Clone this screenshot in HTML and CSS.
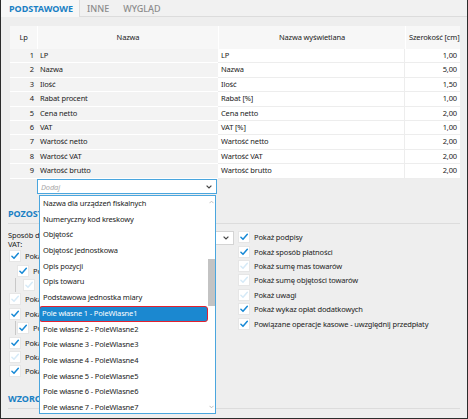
FILE: index.html
```html
<!DOCTYPE html>
<html lang="pl">
<head>
    <meta charset="UTF-8">
    <title>Ustawienia wydruku</title>
    <link rel="stylesheet" href="styles.css">
</head>
<body>
    <div class="window">
        <!-- zakładki -->
        <div class="tabs">
            <div class="tab active">PODSTAWOWE</div>
            <div class="tab">INNE</div>
            <div class="tab">WYGLĄD</div>
        </div>

        <div class="panel">
            <!-- kolumny wydruku -->
            <div class="grid">
                <div class="grid-row grid-head">
                    <div>Lp</div>
                    <div>Nazwa</div>
                    <div>Nazwa wyświetlana</div>
                    <div>Szerokość [cm]</div>
                </div>
                <div class="grid-row"><div class="lp">1</div><div class="name">LP</div><div class="disp">LP</div><div class="num">1,00</div></div>
                <div class="grid-row"><div class="lp">2</div><div class="name">Nazwa</div><div class="disp">Nazwa</div><div class="num">5,00</div></div>
                <div class="grid-row"><div class="lp">3</div><div class="name">Ilość</div><div class="disp">Ilość</div><div class="num">1,50</div></div>
                <div class="grid-row"><div class="lp">4</div><div class="name">Rabat procent</div><div class="disp">Rabat [%]</div><div class="num">1,00</div></div>
                <div class="grid-row"><div class="lp">5</div><div class="name">Cena netto</div><div class="disp">Cena netto</div><div class="num">2,00</div></div>
                <div class="grid-row"><div class="lp">6</div><div class="name">VAT</div><div class="disp">VAT [%]</div><div class="num">1,00</div></div>
                <div class="grid-row"><div class="lp">7</div><div class="name">Wartość netto</div><div class="disp">Wartość netto</div><div class="num">2,00</div></div>
                <div class="grid-row"><div class="lp">8</div><div class="name">Wartość VAT</div><div class="disp">Wartość VAT</div><div class="num">2,00</div></div>
                <div class="grid-row"><div class="lp">9</div><div class="name">Wartość brutto</div><div class="disp">Wartość brutto</div><div class="num">2,00</div></div>
            </div>

            <!-- dodawanie kolumny, lista rozwinięta -->
            <div class="add-row">
                <div class="combo add-combo">
                    <span class="placeholder">Dodaj</span>
                    <svg class="chev" viewBox="0 0 6 4"><path d="M0.6 0.6 L3 3 L5.4 0.6"/></svg>

                    <div class="dropdown">
                        <div class="dd-items">
                            <div class="dd-item">Nazwa dla urządzeń fiskalnych</div>
                            <div class="dd-item">Numeryczny kod kreskowy</div>
                            <div class="dd-item">Objętość</div>
                            <div class="dd-item">Objętość jednostkowa</div>
                            <div class="dd-item">Opis pozycji</div>
                            <div class="dd-item">Opis towaru</div>
                            <div class="dd-item">Podstawowa jednostka miary</div>
                            <div class="dd-item selected">Pole własne 1 - PoleWlasne1</div>
                            <div class="dd-item">Pole własne 2 - PoleWlasne2</div>
                            <div class="dd-item">Pole własne 3 - PoleWlasne3</div>
                            <div class="dd-item">Pole własne 4 - PoleWlasne4</div>
                            <div class="dd-item">Pole własne 5 - PoleWlasne5</div>
                            <div class="dd-item">Pole własne 6 - PoleWlasne6</div>
                            <div class="dd-item">Pole własne 7 - PoleWlasne7</div>
                        </div>
                        <div class="dd-scroll">
                            <svg class="dd-arrow" viewBox="0 0 6 4"><path d="M0.6 3.4 L3 1 L5.4 3.4"/></svg>
                            <div class="dd-track"><div class="dd-thumb"></div></div>
                            <svg class="dd-arrow" viewBox="0 0 6 4"><path d="M0.6 0.6 L3 3 L5.4 0.6"/></svg>
                        </div>
                    </div>
                </div>
            </div>

            <!-- pozostałe -->
            <div class="section-title">POZOSTAŁE</div>
            <div class="options">
                <div class="opt-left">
                    <div class="field">
                        <div class="field-label">Sposób drukowania stawki VAT:</div>
                        <div class="combo field-combo">
                            <span>Procentowo</span>
                            <svg class="chev" viewBox="0 0 6 4"><path d="M0.6 0.6 L3 3 L5.4 0.6"/></svg>
                        </div>
                    </div>
                    <div class="check on"><span class="box"><svg viewBox="0 0 12 12"><path d="M2.3 6.4 L4.8 8.8 L10 2.8"/></svg></span><span>Pokaż tabelę VAT</span></div>
                    <div class="check on lvl1"><span class="box"><svg viewBox="0 0 12 12"><path d="M2.3 6.4 L4.8 8.8 L10 2.8"/></svg></span><span>Pokaż podsumowanie VAT</span></div>
                    <div class="check off lvl2 guide"><span class="box"><svg viewBox="0 0 12 12"><path d="M2.3 6.4 L4.8 8.8 L10 2.8"/></svg></span><span>Pokaż VAT w walucie</span></div>
                    <div class="check off"><span class="box"><svg viewBox="0 0 12 12"><path d="M2.3 6.4 L4.8 8.8 L10 2.8"/></svg></span><span>Pokaż kody kreskowe</span></div>
                    <div class="check on"><span class="box"><svg viewBox="0 0 12 12"><path d="M2.3 6.4 L4.8 8.8 L10 2.8"/></svg></span><span>Pokaż rabat</span></div>
                    <div class="check on lvl1 guide"><span class="box"><svg viewBox="0 0 12 12"><path d="M2.3 6.4 L4.8 8.8 L10 2.8"/></svg></span><span>Pokaż rabat procentowy</span></div>
                    <div class="check on"><span class="box"><svg viewBox="0 0 12 12"><path d="M2.3 6.4 L4.8 8.8 L10 2.8"/></svg></span><span>Pokaż kwotę słownie</span></div>
                    <div class="check off"><span class="box"><svg viewBox="0 0 12 12"><path d="M2.3 6.4 L4.8 8.8 L10 2.8"/></svg></span><span>Pokaż numer zamówienia</span></div>
                    <div class="check on"><span class="box"><svg viewBox="0 0 12 12"><path d="M2.3 6.4 L4.8 8.8 L10 2.8"/></svg></span><span>Pokaż dane nabywcy</span></div>
                </div>
                <div class="opt-right">
                    <div class="check on"><span class="box"><svg viewBox="0 0 12 12"><path d="M2.3 6.4 L4.8 8.8 L10 2.8"/></svg></span><span>Pokaż podpisy</span></div>
                    <div class="check on"><span class="box"><svg viewBox="0 0 12 12"><path d="M2.3 6.4 L4.8 8.8 L10 2.8"/></svg></span><span>Pokaż sposób płatności</span></div>
                    <div class="check off"><span class="box"><svg viewBox="0 0 12 12"><path d="M2.3 6.4 L4.8 8.8 L10 2.8"/></svg></span><span>Pokaż sumę mas towarów</span></div>
                    <div class="check off"><span class="box"><svg viewBox="0 0 12 12"><path d="M2.3 6.4 L4.8 8.8 L10 2.8"/></svg></span><span>Pokaż sumę objętości towarów</span></div>
                    <div class="check off"><span class="box"><svg viewBox="0 0 12 12"><path d="M2.3 6.4 L4.8 8.8 L10 2.8"/></svg></span><span>Pokaż uwagi</span></div>
                    <div class="check on"><span class="box"><svg viewBox="0 0 12 12"><path d="M2.3 6.4 L4.8 8.8 L10 2.8"/></svg></span><span>Pokaż wykaz opłat dodatkowych</span></div>
                    <div class="check on"><span class="box"><svg viewBox="0 0 12 12"><path d="M2.3 6.4 L4.8 8.8 L10 2.8"/></svg></span><span>Powiązane operacje kasowe - uwzględnij przedpłaty</span></div>
                </div>
            </div>

            <!-- wzorce -->
            <div class="section-title">WZORCE WYDRUKÓW</div>
        </div>
    </div>
</body>
</html>
```

FILE: styles.css
```css
body {
    margin: 0;
    font-family: "Noto Sans", "Open Sans", sans-serif;
    font-size: 7.5px;
    letter-spacing: -0.15px;
    color: #222;
}

.window {
    width: 468px;
    height: 419px;
    box-sizing: border-box;
    border: 1px solid #2b2b2b;
    border-top: none;
    background: #eeeeee;
    position: relative;
    overflow: hidden;
}

/* zakładki */
.tabs {
    display: flex;
    height: 17px;
    box-sizing: border-box;
    background: #f1f1f1;
    border-bottom: 1px solid #dcdcdc;
}

.tab {
    padding: 0 7px;
    line-height: 17px;
    font-size: 9px;
    font-weight: 500;
    letter-spacing: 0;
    color: #8c8c8c;
}

.tab.active {
    width: 79px;
    box-sizing: border-box;
    padding: 0 0 0 2px;
    text-align: center;
    font-weight: 700;
    color: #1a80c4;
    background: #f7f7f7;
    border-right: 1px solid #dedede;
    height: 17px;
}

.panel {
    padding: 9px 7px 0 7px;
}

/* tabela kolumn */
.grid {
    margin: 0 2px;
}

.grid-row {
    display: grid;
    grid-template-columns: 27px 181px 187px 55px;
    height: 14.4px;
}

.grid-row > div {
    box-sizing: border-box;
    padding: 0 3px;
    line-height: 13.4px;
    white-space: nowrap;
    overflow: hidden;
}

.grid-head {
    height: 23px;
}

.grid-head > div {
    background: #f7f7f7;
    line-height: 23px;
    text-align: center;
    border-left: 1px solid #fff;
}

.grid-head > div:first-child {
    border-left: none;
}

.grid .lp,
.grid .name {
    background: #f3f3f3;
    border-bottom: 1px solid #fff;
}

.grid .lp {
    text-align: right;
}

.grid .disp,
.grid .num {
    background: #fff;
    border-bottom: 1px solid #ededed;
}

.grid .disp {
    border-right: 1px solid #ededed;
}

.grid .num {
    text-align: right;
}

/* combo */
.combo {
    display: flex;
    align-items: center;
    justify-content: space-between;
    box-sizing: border-box;
    background: #fff;
    border: 1px solid #d4d4d4;
    padding: 0 4px 0 3px;
}

.chev {
    width: 6px;
    height: 4px;
    fill: none;
    stroke: #444;
    stroke-width: 1.2;
}

.add-row {
    padding-left: 29px;
    padding-top: 0.5px;
}

.add-combo {
    position: relative;
    width: 180px;
    height: 15px;
    border-color: #4aa6de;
    z-index: 10;
}

.placeholder {
    font-style: italic;
    color: #a9a9a9;
}

/* rozwinięta lista */
.dropdown {
    position: absolute;
    left: 1px;
    top: 15px;
    width: 177px;
    height: 219px;
    box-sizing: border-box;
    background: #fff;
    border: 1px solid #4aa6de;
    display: flex;
    overflow: hidden;
}

.dd-items {
    flex: 1;
}

.dd-item {
    height: 15.7px;
    line-height: 15.7px;
    padding-left: 3px;
    white-space: nowrap;
    color: #222;
}

.dd-item.selected {
    box-sizing: border-box;
    background: #1b88d0;
    color: #fff;
    border: 1.5px solid #e3212f;
    border-radius: 3px;
    line-height: 12.7px;
    padding-left: 2px;
    margin-left: -1px;
}

.dd-scroll {
    width: 7px;
    display: flex;
    flex-direction: column;
    align-items: center;
}

.dd-arrow {
    width: 5px;
    height: 4px;
    margin: 4px 0;
    fill: none;
    stroke: #b3b3b3;
    stroke-width: 1;
}

.dd-track {
    flex: 1;
    width: 7px;
}

.dd-thumb {
    margin-top: 51px;
    height: 47px;
    background: #c3c3c3;
}

/* sekcje */
.section-title {
    margin-top: 14px;
    padding-bottom: 3px;
    font-size: 9px;
    font-weight: 700;
    letter-spacing: 0;
    line-height: 12px;
    color: #1a80c4;
    border-bottom: 1px solid #dcdcdc;
}

.options {
    display: grid;
    grid-template-columns: 226px 1fr;
    gap: 4px;
    margin-top: 6px;
}

.field {
    display: flex;
    align-items: flex-start;
    height: 19px;
}

.field-label {
    width: 100px;
    line-height: 9px;
    padding-top: 1px;
}

.field-combo {
    flex: 1;
    height: 14px;
    margin-top: 1px;
}

/* checkboxy */
.check {
    display: flex;
    align-items: center;
    gap: 4px;
    height: 14.4px;
    white-space: nowrap;
    position: relative;
}

.opt-left .check {
    padding-left: 1px;
}

.opt-left .check.lvl1 {
    padding-left: 9px;
}

.opt-left .check.lvl2 {
    padding-left: 15px;
}

.check.guide::before {
    content: "";
    position: absolute;
    left: 7px;
    top: 0;
    bottom: 0;
    width: 1px;
    background: #c8c8c8;
}

.box {
    width: 12px;
    height: 12px;
    box-sizing: border-box;
    background: #fff;
    border: 1px solid #e6e6e6;
    display: flex;
}

.box svg {
    width: 10px;
    height: 10px;
    fill: none;
    stroke-width: 1.8;
    stroke-linecap: round;
    stroke-linejoin: round;
}

.check.on .box svg {
    stroke: #1689d6;
}

.check.off .box svg {
    stroke: #d6eaf7;
}
```
